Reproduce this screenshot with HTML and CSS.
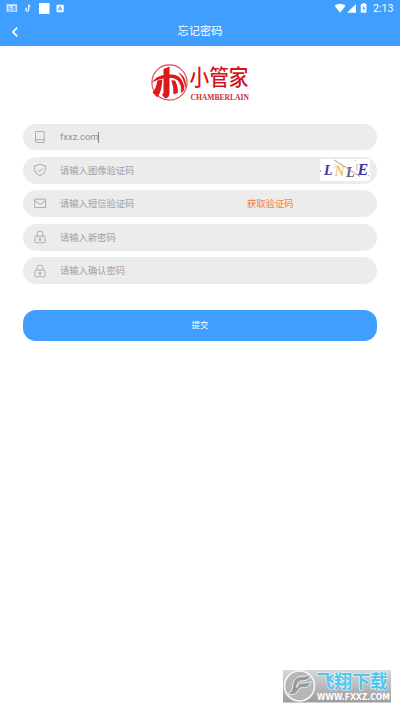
FILE: index.html
```html
<!DOCTYPE html>
<html lang="zh-CN">
<head>
<meta charset="utf-8">
<title>忘记密码</title>
<link rel="stylesheet" href="styles.css">
</head>
<body>
<header class="top">
  <div class="status">
    <svg class="status-left" width="70" height="16" viewBox="0 0 70 16">
      <rect x="6.500" y="4.200" width="10.500" height="7.600" rx=".6" fill="#d5e9ff"/>
      <text x="7.200" y="10.300" class="tiny-label">头条</text>
      <path d="M28.700 4.500v5.200a1.500 1.500 0 1 1-1.500-1.500M28.700 4.700q.3 1.700 1.900 1.900" fill="none" stroke="#e4f4ff" stroke-width="1.200"/>
      <rect x="39" y="3" width="10.500" height="11" rx=".5" fill="#fff"/>
      <rect x="56.500" y="4.700" width="7.300" height="7.600" rx=".8" fill="#f2f8ff"/>
      <path d="M58.500 10.500l1.650-4 1.650 4M59.200 9.200h1.900" fill="none" stroke="#409eff" stroke-width=".9"/>
    </svg>
    <div class="status-right">
      <svg width="36" height="16" viewBox="0 0 36 16" fill="#fff">
        <path d="M.6 5.700Q6 1.800 11.600 5.700L6.100 12.800z"/>
        <path d="M22 4v8.800h-9z"/>
        <path d="M28.900 3h2v1h1.500v8.800h-5.600V4h2.100z"/>
        <path d="M30 5.200l-1.500 3.600h1.200v2.600l1.500-3.600H30z" fill="#409eff"/>
      </svg>
      <span class="time">2:13</span>
    </div>
  </div>
  <div class="nav">
    <svg class="back" width="8" height="12" viewBox="0 0 8 12"><path d="M6.200 1.700L2 6l4.200 4.300" fill="none" stroke="#fff" stroke-width="1.700"/></svg>
    <h1 class="title">忘记密码</h1>
  </div>
</header>
<main class="page">
  <svg class="logo" width="104" height="44" viewBox="148 60 104 44">
    <circle cx="169.500" cy="82.500" r="17.600" fill="none" stroke="#d8484c" stroke-width="1.100"/>
    <g fill="#dc191d">
      <path d="M151.800 83Q156 76 163.500 75V69l6-2.500V74.500q8-.8 11.500 4.500 3.500 4.500 3.300 11l-3.300 3.300q1-8-2.800-12.300-2.500-3-8.700-3.200v15q.1 5-4.300 5.600l-3.500-3.800q1.800.2 1.800-2.500V78.500Q156 79.500 151.800 83z"/>
      <path d="M157.300 80.500l5-1q-.3 11.500-5 18l-4.800-5q4-4.500 4.800-12z"/>
      <path d="M171.300 80.300l3.700.3q3 5.200 3 12.200l-4.500 1.800q.3-8-2.200-14.300z"/>
      <path d="M178 72.500q7.500 2.500 8.200 12.500l-1 3.500q-1-10.500-7.200-16z"/>
    </g>
    <g transform="translate(0 85.300) scale(1 1.100)"><text class="logo-cn" x="189.500" y="0" textLength="59" lengthAdjust="spacingAndGlyphs">小管家</text></g>
    <text class="logo-en" x="190.500" y="100.200" textLength="58.500" lengthAdjust="spacingAndGlyphs">CHAMBERLAIN</text>
  </svg>
  <form class="form">
    <label class="field">
      <svg class="icon" viewBox="0 0 14 14"><path d="M2.500 11V2.500Q2.500 1.500 3.500 1.500h6.700q1 0 1 1v7.200M2.500 11q0-1.300 1.300-1.300h7.400v2.800H3.800Q2.500 12.500 2.500 11z"/></svg>
      <span class="value">fxxz.com</span><i class="caret"></i>
    </label>
    <label class="field">
      <svg class="icon" viewBox="0 0 14 14"><path d="M7 1.200q2.300 1.500 5.500 1.500v4q0 4-5.500 6-5.500-2-5.500-6v-4Q4.700 2.700 7 1.200zM4.500 6.700l2 2 3.500-3.500"/></svg>
      <span class="hint">请输入图像验证码</span>
      <svg class="captcha" width="50" height="22" viewBox="0 0 50 22">
        <path fill="#fff" d="M0 0h50v22H0z"/>
        <text x="4" y="16" class="glyph blue">L</text>
        <text x="14.500" y="17" class="glyph gold">N</text>
        <text x="26" y="17.500" class="glyph navy">L</text>
        <text x="37.500" y="15.800" class="glyph blue heavy">E</text>
        <path d="M14 .8L40 17.500" stroke="#a77d79" stroke-width=".8"/>
        <path d="M37 4.500v7" stroke="#ba8bc4" stroke-width=".7"/>
        <path d="M13 9l10-5M18 8l5 8" stroke="#ecc68c" stroke-width=".7"/>
        <path d="M.5 11v2M35 1.500h1M48 16.500h1" stroke="#a9a9b9"/>
      </svg>
    </label>
    <label class="field">
      <svg class="icon" viewBox="0 0 14 14"><path d="M1.700 2.200h10.800v8.400H1.700zM1.700 3.500l5.400 4 5.400-4"/></svg>
      <span class="hint">请输入短信验证码</span>
      <span class="get-code">获取验证码</span>
    </label>
    <label class="field">
      <svg class="icon" viewBox="0 0 14 14"><rect x="1.900" y="6.200" width="10.200" height="6.600" rx="1"/><path d="M4 6.200V4a3 3 0 0 1 6 0v2.200M7 10.300v1.200"/><circle cx="7" cy="9.200" r="1.100"/></svg>
      <span class="hint">请输入新密码</span>
    </label>
    <label class="field">
      <svg class="icon" viewBox="0 0 14 14"><rect x="1.900" y="6.200" width="10.200" height="6.600" rx="1"/><path d="M4 6.200V4a3 3 0 0 1 6 0v2.200M7 10.300v1.200"/><circle cx="7" cy="9.200" r="1.100"/></svg>
      <span class="hint">请输入确认密码</span>
    </label>
    <button class="submit" type="button">提交</button>
  </form>
</main>
<svg class="watermark" width="110" height="36" viewBox="282 668 110 36">
  <defs><linearGradient id="plate" x1="0" y1="0" x2="0" y2="1"><stop offset="0" stop-color="#d8d8d8"/><stop offset="1" stop-color="#9b9c9e"/></linearGradient></defs>
  <rect x="283" y="670" width="108" height="32.500" fill="url(#plate)"/>
  <circle cx="299.500" cy="686" r="15" fill="#b4b6b8" stroke="#f7f7f7" stroke-width="1.600"/>
  <path d="M287.500 694.500q4.500-2 5-7.500.5-9 7.500-10.500 6 .2 10.500-2-.8 5.800-7 6.300-6-.3-6.300 3.700l-.4 3q1.700-4.500 6-4.500 4 .5 8-1.500-.8 6-6.500 6.200-5-.7-6.300 3-2.500 5-10.500 3.800z" fill="#96999b" stroke="#f5f5f5" stroke-width=".9"/>
  <text class="mark-cn" x="316.500" y="688.200" textLength="71.500" lengthAdjust="spacingAndGlyphs">飞翔下载</text>
  <text class="mark-url" x="317" y="700" textLength="73" lengthAdjust="spacingAndGlyphs">WWW.FXXZ.COM</text>
</svg>
</body>
</html>
```
FILE: styles.css
```css
* { box-sizing: border-box; }
body {
  margin: 0;
  width: 400px;
  height: 711px;
  overflow: hidden;
  background: #fff;
  font-family: Roboto, "Noto Sans CJK SC", sans-serif;
}
.top { height: 46px; background: #409eff; color: #fff; }
.status { display: flex; justify-content: space-between; height: 16px; }
.status-right { display: flex; padding-right: 6px; gap: 3px; }
.time { width: 21px; font-size: 10.6px; line-height: 18px; }
.tiny-label { font-size: 4.500px; font-weight: 700; fill: #409eff; }
.nav { display: flex; align-items: center; height: 30px; padding-left: 11px; }
.title {
  flex: 1;
  margin: 1px 19px 0 0;
  text-align: center;
  font-size: 11.200px;
  line-height: 16px;
  font-weight: 400;
}
.back { margin-top: 1px; }
.page { display: flex; flex-direction: column; align-items: center; padding: 14px 23px 0; }
.logo { flex: none; }
.logo-cn { font: 500 20px "Noto Sans CJK SC", sans-serif; fill: #cf171b; }
.logo-en { font: 700 8px "Liberation Serif", serif; fill: #c83236; }
.form { display: flex; flex-direction: column; gap: 6.600px; width: 354px; margin-top: 19.700px; }
.field {
  display: flex;
  align-items: center;
  height: 26.800px;
  padding: 0 7px 0 10px;
  border-radius: 13.400px;
  background: #ececec;
  font-size: 9.300px;
  line-height: 14px;
  color: #a0a0a0;
}
.icon { width: 14px; height: 14px; margin-right: 13px; fill: none; stroke: #a5a5a5; stroke-width: .9; }
.hint { padding-top: 1px; }
.value { font-size: 9.500px; color: #929292; }
.caret { width: 1px; height: 11px; margin-left: -1px; background: #888; }
.get-code { margin: 0 76.500px 0 auto; color: #ff7a2a; }
.captcha { margin-left: auto; }
.glyph { font: italic 700 14px "Liberation Serif", serif; }
.blue { fill: #39349f; }
.heavy { font-size: 16px; }
.navy { fill: #526294; }
.gold { fill: #ecc47a; }
.submit {
  height: 31px;
  margin-top: 19.500px;
  padding: 0 0 3px;
  border: 0;
  border-radius: 13px;
  background: #409eff;
  color: #fff;
  font-family: inherit;
  font-size: 8.500px;
}
.watermark { position: absolute; left: 282px; top: 668px; }
.mark-cn { font: 700 18px "Noto Sans CJK SC", sans-serif; fill: #55c3ea; stroke: #e9f8fc; stroke-width: 1.200; paint-order: stroke; }
.mark-url { font: 700 8px "DejaVu Sans", sans-serif; fill: #fff; }
```
